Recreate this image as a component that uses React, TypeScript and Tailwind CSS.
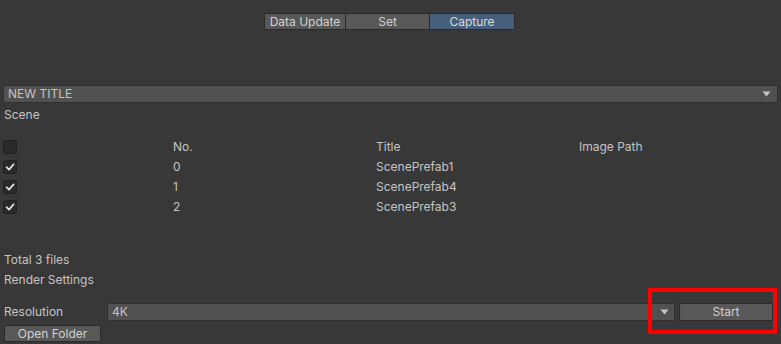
import React from 'react';

const ROWS = [
  { no: 0, title: 'ScenePrefab1', path: '' },
  { no: 1, title: 'ScenePrefab4', path: '' },
  { no: 2, title: 'ScenePrefab3', path: '' },
];

function Check({ checked }: { checked: boolean }) {
  return (
    <div className="w-[14px] h-[14px] rounded-[2px] bg-[#2a2a2a] border border-[#212121] flex items-center justify-center">
      {checked && (
        <svg width="10" height="10" viewBox="0 0 10 10">
          <path d="M1.5 5.2 L4 7.6 L8.6 2.4" fill="none" stroke="#e6e6e6" strokeWidth="1.6" strokeLinecap="round" strokeLinejoin="round" />
        </svg>
      )}
    </div>
  );
}

function Arrow() {
  return (
    <svg width="9" height="6" viewBox="0 0 9 6">
      <path d="M0.5 0.5 L8.5 0.5 L4.5 5.5 Z" fill="#c4c4c4" />
    </svg>
  );
}

export default function App() {
  const tabs = ['Data Update', 'Set', 'Capture'];
  const active = 'Capture';

  return (
    <div
      className="relative w-[781px] h-[344px] overflow-hidden bg-[#383838] text-[12px] text-[#c4c4c4]"
      style={{ fontFamily: 'Inter, "Liberation Sans", sans-serif' }}
    >
      {/* toolbar */}
      <div className="flex pl-[264px] pt-[13px]">
        {tabs.map((t, i) => (
          <div
            key={t}
            className={`h-[17px] flex items-center justify-center border border-[#2a2a2a] ${
              i === 0 ? 'w-[82px] rounded-l-[2px]' : i === 1 ? 'w-[84px] border-l-0' : 'w-[85px] border-l-0 rounded-r-[2px]'
            } ${t === active ? 'bg-[#46607c] text-[#d8d8d8]' : 'bg-[#585858] text-[#d0d0d0]'}`}
          >
            {t}
          </div>
        ))}
      </div>

      {/* title popup */}
      <div className="mt-[55px] mx-[3px] h-[18px] rounded-[2px] bg-[#515151] border border-[#303030] flex items-center justify-between pl-[4px] pr-[6px]">
        <span>NEW TITLE</span>
        <Arrow />
      </div>

      <div className="mt-[2px] h-[20px] flex items-center pl-[4px]">Scene</div>

      {/* table */}
      <div className="mt-[12px]">
        <div className="h-[20px] flex items-center">
          <div className="w-[173px] pl-[3px]">
            <Check checked={false} />
          </div>
          <div className="w-[203px]">No.</div>
          <div className="w-[203px]">Title</div>
          <div>Image Path</div>
        </div>
        {ROWS.map((r) => (
          <div key={r.no} className="h-[20px] flex items-center">
            <div className="w-[173px] pl-[3px]">
              <Check checked />
            </div>
            <div className="w-[203px]">{r.no}</div>
            <div className="w-[203px]">{r.title}</div>
            <div>{r.path}</div>
          </div>
        ))}
      </div>

      <div className="mt-[33px] h-[20px] flex items-center pl-[4px]">Total 3 files</div>
      <div className="h-[20px] flex items-center pl-[4px]">Render Settings</div>

      {/* resolution */}
      <div className="mt-[13px] h-[18px] flex items-center">
        <div className="w-[107px] pl-[4px]">Resolution</div>
        <div className="w-[568px] h-[18px] rounded-[2px] bg-[#515151] border border-[#303030] flex items-center justify-between pl-[4px] pr-[5px]">
          <span>4K</span>
          <Arrow />
        </div>
        <div className="ml-[4px] w-[94px] h-[18px] rounded-[2px] bg-[#585858] border border-[#2a2a2a] flex items-center justify-center text-[#d0d0d0]">
          Start
        </div>
      </div>

      <div className="mt-[4px] ml-[4px] w-[97px] h-[17px] rounded-[2px] bg-[#585858] border border-[#2a2a2a] flex items-center justify-center text-[#d0d0d0]">
        Open Folder
      </div>

      {/* annotation highlight */}
      <div className="absolute left-[648px] top-[288px] w-[129px] h-[46px] border-[4px] border-[#ff0000]" />
    </div>
  );
}
